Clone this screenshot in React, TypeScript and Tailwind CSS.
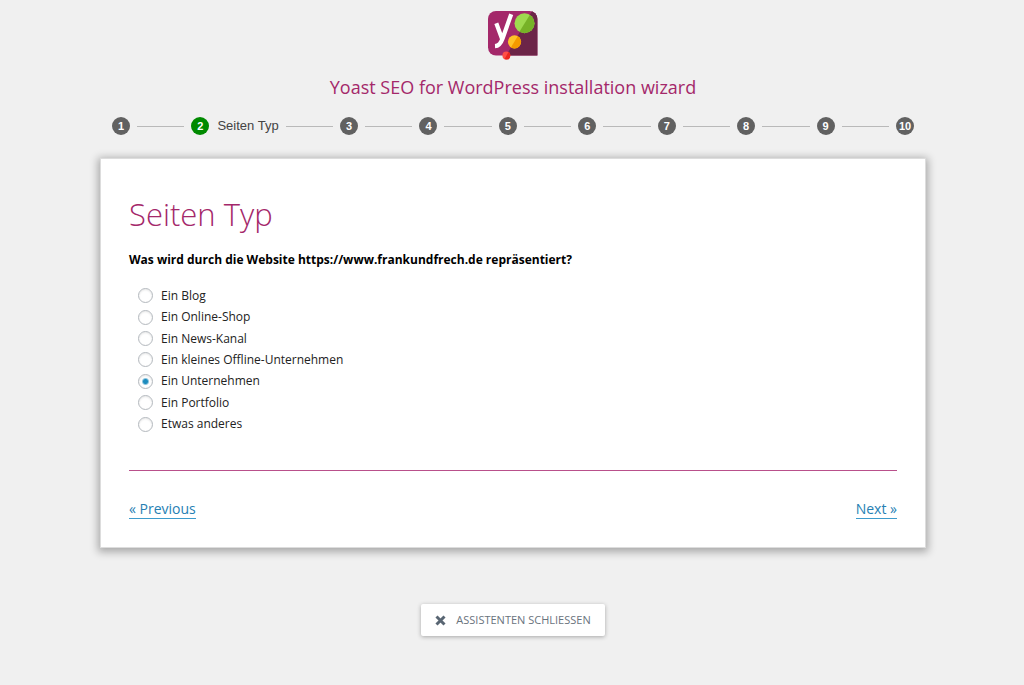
import { useState } from "react";

const steps = [
  { id: 1, label: "" },
  { id: 2, label: "Seiten Typ" },
  { id: 3, label: "" },
  { id: 4, label: "" },
  { id: 5, label: "" },
  { id: 6, label: "" },
  { id: 7, label: "" },
  { id: 8, label: "" },
  { id: 9, label: "" },
  { id: 10, label: "" },
];

const siteTypes = [
  "Ein Blog",
  "Ein Online-Shop",
  "Ein News-Kanal",
  "Ein kleines Offline-Unternehmen",
  "Ein Unternehmen",
  "Ein Portfolio",
  "Etwas anderes",
];

function Logo() {
  return (
    <svg width="50" height="50" viewBox="0 0 50 50" aria-hidden="true">
      <defs>
        <clipPath id="plate">
          <path d="M8 0h33.400a8 8 0 0 1 8 8v36.500H8a8 8 0 0 1-8-8V8a8 8 0 0 1 8-8z" />
        </clipPath>
        <clipPath id="green"><circle cx="36.500" cy="12.300" r="10" /></clipPath>
        <clipPath id="orange"><circle cx="26.500" cy="30.800" r="6.600" /></clipPath>
        <clipPath id="red"><circle cx="18.400" cy="44.600" r="4" /></clipPath>
      </defs>
      <g clipPath="url(#plate)">
        <path fill="#a4286a" d="M0 0h50v45H0z" />
        <path fill="#6c2548" d="M44 0h7v45H18z" />
      </g>
      <path
        d="M8.300 12.300L14.300 28.500M23.200 3.300L14.600 27.500C12.800 32.500 11 35 7 35.200"
        fill="none"
        stroke="#fff"
        strokeWidth="4.200"
      />
      <g clipPath="url(#green)">
        <path fill="#9fda4f" d="M26 2h21v21H26z" />
        <path fill="#77b227" d="M43 2h5v21H30z" />
      </g>
      <g clipPath="url(#orange)">
        <path fill="#fec228" d="M19 23h15v15H19z" />
        <path fill="#f49a00" d="M31 23h3v15H22z" />
      </g>
      <g clipPath="url(#red)">
        <path fill="#ff4e47" d="M14 40h9v9h-9z" />
        <path fill="#ed261f" d="M21 40h3v9h-8z" />
      </g>
    </svg>
  );
}

function Stepper({ current }: { current: number }) {
  return (
    <ol className="flex w-full items-center px-3 font-['Liberation_Sans',sans-serif]">
      {steps.map((step, index) => {
        const active = step.id === current;
        return (
          <li
            key={step.id}
            className={index === 0 ? "flex flex-none items-center" : "flex flex-auto items-center"}
          >
            {index > 0 && <span className="mx-[7px] h-px flex-1 bg-[#b9b9b9]" />}
            <button
              type="button"
              aria-current={active ? "step" : undefined}
              className="flex items-center gap-2 text-[13px] leading-[18px] text-[#444]"
            >
              <span
                className={
                  active
                    ? "flex size-[18px] items-center justify-center rounded-full bg-[#008a00] text-[11px] font-bold text-white"
                    : "flex size-[18px] items-center justify-center rounded-full bg-[#616161] text-[11px] font-bold text-white"
                }
              >
                {step.id}
              </span>
              {active && <span>{step.label}</span>}
            </button>
          </li>
        );
      })}
    </ol>
  );
}

export default function App() {
  const [type, setType] = useState("Ein Unternehmen");

  return (
    <div className="flex min-h-screen flex-col items-center bg-[#f0f0f0] pt-[11px] pb-12 pl-[2px] font-['Open_Sans',sans-serif] text-[12px] text-[#222]">
      <Logo />
      <h1 className="mt-3 text-[18px] leading-7 text-[#a4286a]">
        Yoast SEO for WordPress installation wizard
      </h1>

      <main className="mt-4 w-full max-w-[826px]">
        <Stepper current={2} />

        <section className="mt-[23px] border border-[#ddd] bg-white px-7 pt-[35px] pb-7 shadow-[0_2px_8px_2px_rgba(0,0,0,0.3)]">
          <h2 className="text-[31px] leading-10 font-light text-[#a4286a]">Seiten Typ</h2>

          <fieldset className="mt-4">
            <legend className="text-[12px] leading-5 font-bold text-black">
              Was wird durch die Website https://www.frankundfrech.de repräsentiert?
            </legend>
            <div className="mt-[15px] flex min-h-[150px] flex-col pl-[9px]">
              {siteTypes.map((name) => (
                <label key={name} className="flex flex-1 items-center gap-2">
                  <input
                    type="radio"
                    name="site-type"
                    value={name}
                    checked={type === name}
                    onChange={() => setType(name)}
                    className="size-[15px] appearance-none rounded-full border border-[#b4b9be] bg-white shadow-[inset_0_1px_2px_rgba(0,0,0,0.1)] checked:bg-[radial-gradient(circle,#1e8cbe_2px,transparent_4px)]"
                  />
                  <span>{name}</span>
                </label>
              ))}
            </div>
          </fieldset>

          <div role="separator" className="mt-[35px] h-px bg-[#b9508b]" />

          <nav className="mt-7 flex justify-between text-[14px] leading-[19px]">
            <a href="#previous" className="border-b border-[#3d9bcc] text-[#2680b3]">
              « Previous
            </a>
            <a href="#next" className="border-b border-[#3d9bcc] text-[#2680b3]">
              Next »
            </a>
          </nav>
        </section>
      </main>

      <button
        type="button"
        className="mt-14 flex h-8 items-center gap-[10px] rounded-[2px] bg-white px-[14px] text-[11px] text-[#69737d] shadow-[0_1px_4px_rgba(0,0,0,0.3)]"
      >
        <svg width="11" height="11" viewBox="0 0 11 11" aria-hidden="true">
          <path d="M1.500 1.500l8 8M9.500 1.500l-8 8" stroke="#596673" strokeWidth="3" />
        </svg>
        ASSISTENTEN SCHLIESSEN
      </button>
    </div>
  );
}
